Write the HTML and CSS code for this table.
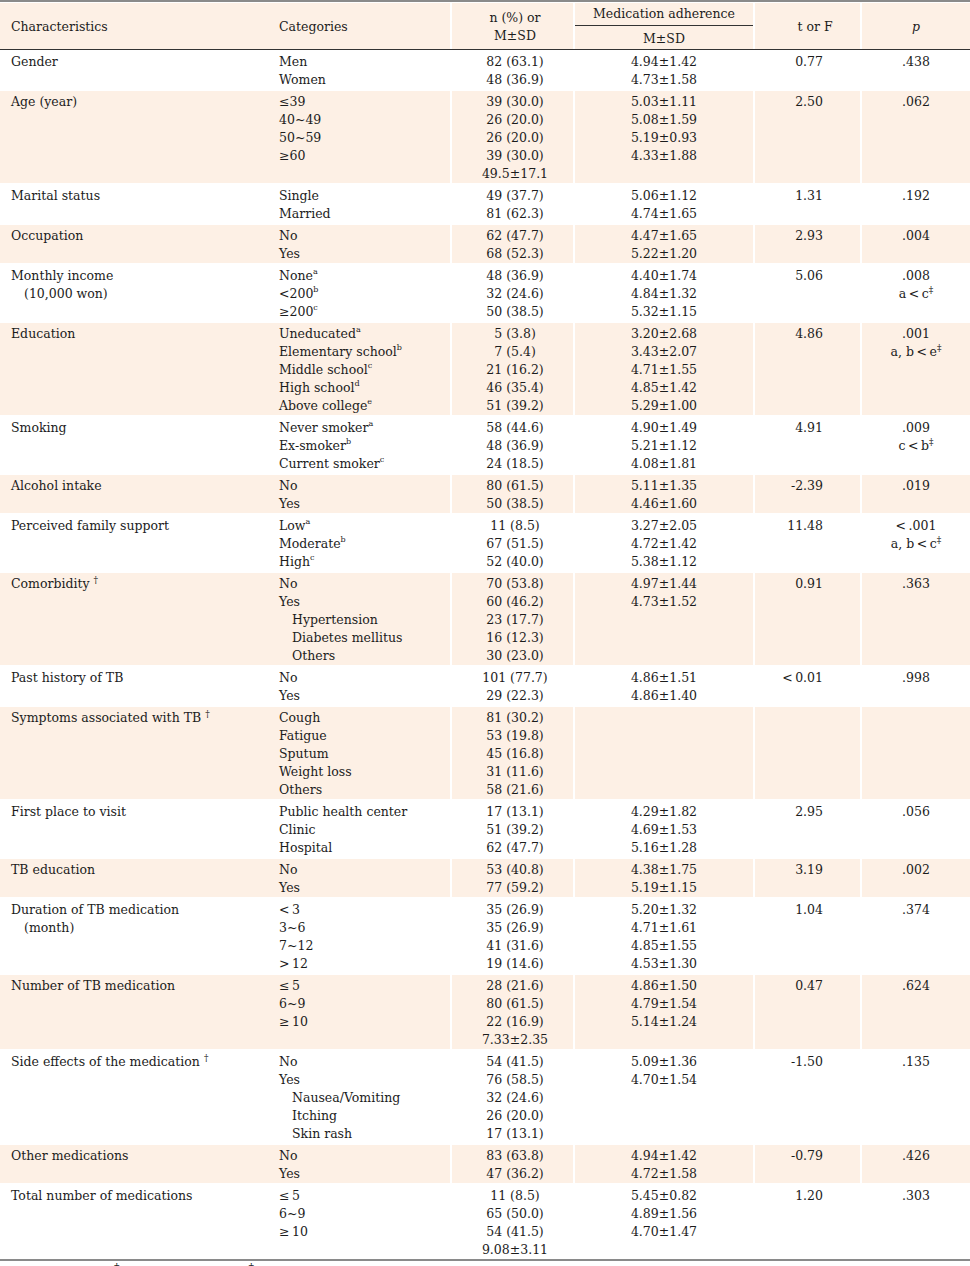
FILE: index.html
```html
<!DOCTYPE html>
<html lang="en">
<head>
<meta charset="utf-8">
<title>Medication adherence by characteristics</title>
<link rel="stylesheet" href="styles.css">
</head>
<body>
<div class="tbl">
  <div class="row head">
    <div class="c c1">Characteristics</div>
    <div class="c c2">Categories</div>
    <div class="c c3">n (%) or<br>M±SD</div>
    <div class="c c4"><div class="ma">Medication adherence</div><div class="ms">M±SD</div></div>
    <div class="c c5">t or F</div>
    <div class="c c6"><i>p</i></div>
  </div>
  <div class="tbody">
    <div class="row">
      <div class="c c1">Gender</div>
      <div class="c c2">Men<br>Women</div>
      <div class="c c3">82 (63.1)<br>48 (36.9)</div>
      <div class="c c4">4.94±1.42<br>4.73±1.58</div>
      <div class="c c5">0.77</div>
      <div class="c c6">.438</div>
    </div>
    <div class="row alt">
      <div class="c c1">Age (year)</div>
      <div class="c c2">≤39<br>40~49<br>50~59<br>≥60</div>
      <div class="c c3">39 (30.0)<br>26 (20.0)<br>26 (20.0)<br>39 (30.0)<br>49.5±17.1</div>
      <div class="c c4">5.03±1.11<br>5.08±1.59<br>5.19±0.93<br>4.33±1.88</div>
      <div class="c c5">2.50</div>
      <div class="c c6">.062</div>
    </div>
    <div class="row">
      <div class="c c1">Marital status</div>
      <div class="c c2">Single<br>Married</div>
      <div class="c c3">49 (37.7)<br>81 (62.3)</div>
      <div class="c c4">5.06±1.12<br>4.74±1.65</div>
      <div class="c c5">1.31</div>
      <div class="c c6">.192</div>
    </div>
    <div class="row alt">
      <div class="c c1">Occupation</div>
      <div class="c c2">No<br>Yes</div>
      <div class="c c3">62 (47.7)<br>68 (52.3)</div>
      <div class="c c4">4.47±1.65<br>5.22±1.20</div>
      <div class="c c5">2.93</div>
      <div class="c c6">.004</div>
    </div>
    <div class="row">
      <div class="c c1">Monthly income<span class="ind">(10,000 won)</span></div>
      <div class="c c2">None<sup>a</sup><br>&lt;200<sup>b</sup><br>≥200<sup>c</sup></div>
      <div class="c c3">48 (36.9)<br>32 (24.6)<br>50 (38.5)</div>
      <div class="c c4">4.40±1.74<br>4.84±1.32<br>5.32±1.15</div>
      <div class="c c5">5.06</div>
      <div class="c c6">.008<br>a&#8201;&lt;&#8201;c<sup class="dg">‡</sup></div>
    </div>
    <div class="row alt">
      <div class="c c1">Education</div>
      <div class="c c2">Uneducated<sup>a</sup><br>Elementary school<sup>b</sup><br>Middle school<sup>c</sup><br>High school<sup>d</sup><br>Above college<sup>e</sup></div>
      <div class="c c3">5 (3.8)<br>7 (5.4)<br>21 (16.2)<br>46 (35.4)<br>51 (39.2)</div>
      <div class="c c4">3.20±2.68<br>3.43±2.07<br>4.71±1.55<br>4.85±1.42<br>5.29±1.00</div>
      <div class="c c5">4.86</div>
      <div class="c c6">.001<br>a, b&#8201;&lt;&#8201;e<sup class="dg">‡</sup></div>
    </div>
    <div class="row">
      <div class="c c1">Smoking</div>
      <div class="c c2">Never smoker<sup>a</sup><br>Ex-smoker<sup>b</sup><br>Current smoker<sup>c</sup></div>
      <div class="c c3">58 (44.6)<br>48 (36.9)<br>24 (18.5)</div>
      <div class="c c4">4.90±1.49<br>5.21±1.12<br>4.08±1.81</div>
      <div class="c c5">4.91</div>
      <div class="c c6">.009<br>c&#8201;&lt;&#8201;b<sup class="dg">‡</sup></div>
    </div>
    <div class="row alt">
      <div class="c c1">Alcohol intake</div>
      <div class="c c2">No<br>Yes</div>
      <div class="c c3">80 (61.5)<br>50 (38.5)</div>
      <div class="c c4">5.11±1.35<br>4.46±1.60</div>
      <div class="c c5">-2.39</div>
      <div class="c c6">.019</div>
    </div>
    <div class="row">
      <div class="c c1">Perceived family support</div>
      <div class="c c2">Low<sup>a</sup><br>Moderate<sup>b</sup><br>High<sup>c</sup></div>
      <div class="c c3">11 (8.5)<br>67 (51.5)<br>52 (40.0)</div>
      <div class="c c4">3.27±2.05<br>4.72±1.42<br>5.38±1.12</div>
      <div class="c c5">11.48</div>
      <div class="c c6">&lt;&#8201;.001<br>a, b&#8201;&lt;&#8201;c<sup class="dg">‡</sup></div>
    </div>
    <div class="row alt">
      <div class="c c1">Comorbidity <sup class="dg">†</sup></div>
      <div class="c c2">No<br>Yes<span class="ind">Hypertension</span><span class="ind">Diabetes mellitus</span><span class="ind">Others</span></div>
      <div class="c c3">70 (53.8)<br>60 (46.2)<br>23 (17.7)<br>16 (12.3)<br>30 (23.0)</div>
      <div class="c c4">4.97±1.44<br>4.73±1.52</div>
      <div class="c c5">0.91</div>
      <div class="c c6">.363</div>
    </div>
    <div class="row">
      <div class="c c1">Past history of TB</div>
      <div class="c c2">No<br>Yes</div>
      <div class="c c3">101 (77.7)<br>29 (22.3)</div>
      <div class="c c4">4.86±1.51<br>4.86±1.40</div>
      <div class="c c5">&lt;&#8201;0.01</div>
      <div class="c c6">.998</div>
    </div>
    <div class="row alt">
      <div class="c c1">Symptoms associated with TB <sup class="dg">†</sup></div>
      <div class="c c2">Cough<br>Fatigue<br>Sputum<br>Weight loss<br>Others</div>
      <div class="c c3">81 (30.2)<br>53 (19.8)<br>45 (16.8)<br>31 (11.6)<br>58 (21.6)</div>
      <div class="c c4"></div>
      <div class="c c5"></div>
      <div class="c c6"></div>
    </div>
    <div class="row">
      <div class="c c1">First place to visit</div>
      <div class="c c2">Public health center<br>Clinic<br>Hospital</div>
      <div class="c c3">17 (13.1)<br>51 (39.2)<br>62 (47.7)</div>
      <div class="c c4">4.29±1.82<br>4.69±1.53<br>5.16±1.28</div>
      <div class="c c5">2.95</div>
      <div class="c c6">.056</div>
    </div>
    <div class="row alt">
      <div class="c c1">TB education</div>
      <div class="c c2">No<br>Yes</div>
      <div class="c c3">53 (40.8)<br>77 (59.2)</div>
      <div class="c c4">4.38±1.75<br>5.19±1.15</div>
      <div class="c c5">3.19</div>
      <div class="c c6">.002</div>
    </div>
    <div class="row">
      <div class="c c1">Duration of TB medication<span class="ind">(month)</span></div>
      <div class="c c2">&lt;&#8201;3<br>3~6<br>7~12<br>&gt;&#8201;12</div>
      <div class="c c3">35 (26.9)<br>35 (26.9)<br>41 (31.6)<br>19 (14.6)</div>
      <div class="c c4">5.20±1.32<br>4.71±1.61<br>4.85±1.55<br>4.53±1.30</div>
      <div class="c c5">1.04</div>
      <div class="c c6">.374</div>
    </div>
    <div class="row alt">
      <div class="c c1">Number of TB medication</div>
      <div class="c c2">≤&#8201;5<br>6~9<br>≥&#8201;10</div>
      <div class="c c3">28 (21.6)<br>80 (61.5)<br>22 (16.9)<br>7.33±2.35</div>
      <div class="c c4">4.86±1.50<br>4.79±1.54<br>5.14±1.24</div>
      <div class="c c5">0.47</div>
      <div class="c c6">.624</div>
    </div>
    <div class="row">
      <div class="c c1">Side effects of the medication <sup class="dg">†</sup></div>
      <div class="c c2">No<br>Yes<span class="ind">Nausea/Vomiting</span><span class="ind">Itching</span><span class="ind">Skin rash</span></div>
      <div class="c c3">54 (41.5)<br>76 (58.5)<br>32 (24.6)<br>26 (20.0)<br>17 (13.1)</div>
      <div class="c c4">5.09±1.36<br>4.70±1.54</div>
      <div class="c c5">-1.50</div>
      <div class="c c6">.135</div>
    </div>
    <div class="row alt">
      <div class="c c1">Other medications</div>
      <div class="c c2">No<br>Yes</div>
      <div class="c c3">83 (63.8)<br>47 (36.2)</div>
      <div class="c c4">4.94±1.42<br>4.72±1.58</div>
      <div class="c c5">-0.79</div>
      <div class="c c6">.426</div>
    </div>
    <div class="row">
      <div class="c c1">Total number of medications</div>
      <div class="c c2">≤&#8201;5<br>6~9<br>≥&#8201;10</div>
      <div class="c c3">11 (8.5)<br>65 (50.0)<br>54 (41.5)<br>9.08±3.11</div>
      <div class="c c4">5.45±0.82<br>4.89±1.56<br>4.70±1.47</div>
      <div class="c c5">1.20</div>
      <div class="c c6">.303</div>
    </div>
  </div>
  <div class="foot">TB=tuberculosis; <sup class="fdg">†</sup>Multiple responses; <sup class="fdg">‡</sup>Scheffé test.</div>
</div>
</body>
</html>
```

FILE: styles.css
```css
html, body {
  margin: 0;
  padding: 0;
  background: #ffffff;
}

body {
  font-family: "DejaVu Serif", "Liberation Serif", serif;
  font-size: 12.5px;
  line-height: 18px;
  color: #1c1c1c;
}

.tbl {
  width: 970px;
  border-top: 2px solid #8a8a8a;
}

.row {
  display: grid;
  grid-template-columns: 268px 182px 123px 180px 107px 110px;
}

.c {
  padding: 2px 0 0 0;
  white-space: nowrap;
}

.c3, .c4, .c5, .c6 {
  border-left: 2px solid #ffffff;
}

.alt .c,
.head .c {
  background: #fdf0e5;
}

.c1 { padding-left: 11px; }
.c2 { padding-left: 11px; }
.c3 { text-align: center; padding-left: 5px; }
.c4 { text-align: center; }
.c5 { text-align: right; padding-right: 37px; }
.c6 { text-align: center; }

.ind {
  display: block;
  padding-left: 13px;
}

sup {
  font-size: 8px;
  line-height: 0;
  vertical-align: 6px;
}

sup.dg {
  font-size: 9px;
  vertical-align: 5px;
}

/* header */
.head {
  margin-top: 1px;
  height: 46px;
  border-bottom: 1px solid #333333;
}

.head .c {
  display: flex;
  flex-direction: column;
  justify-content: center;
  padding: 2px 0 0 0;
}

.head .c1, .head .c2 { padding-left: 11px; }
.head .c3 { align-items: center; padding-left: 5px; }
.head .c5 { align-items: center; padding-left: 15px; padding-right: 0; }
.head .c6 { align-items: center; }

.head .c4 {
  justify-content: flex-start;
  align-items: stretch;
  padding-top: 0;
}

.ma {
  margin-top: 2px;
  padding-bottom: 2px;
  border-bottom: 1px solid #333333;
}

.ms {
  margin-top: 4px;
}

/* body */
.tbody {
  display: flex;
  flex-direction: column;
  gap: 2px;
  padding-top: 1px;
  border-bottom: 2px solid #8a8a8a;
}

.foot {
  padding-top: 7px;
  white-space: nowrap;
}

.fdg {
  font-size: 11px;
  vertical-align: 12px;
}
```
